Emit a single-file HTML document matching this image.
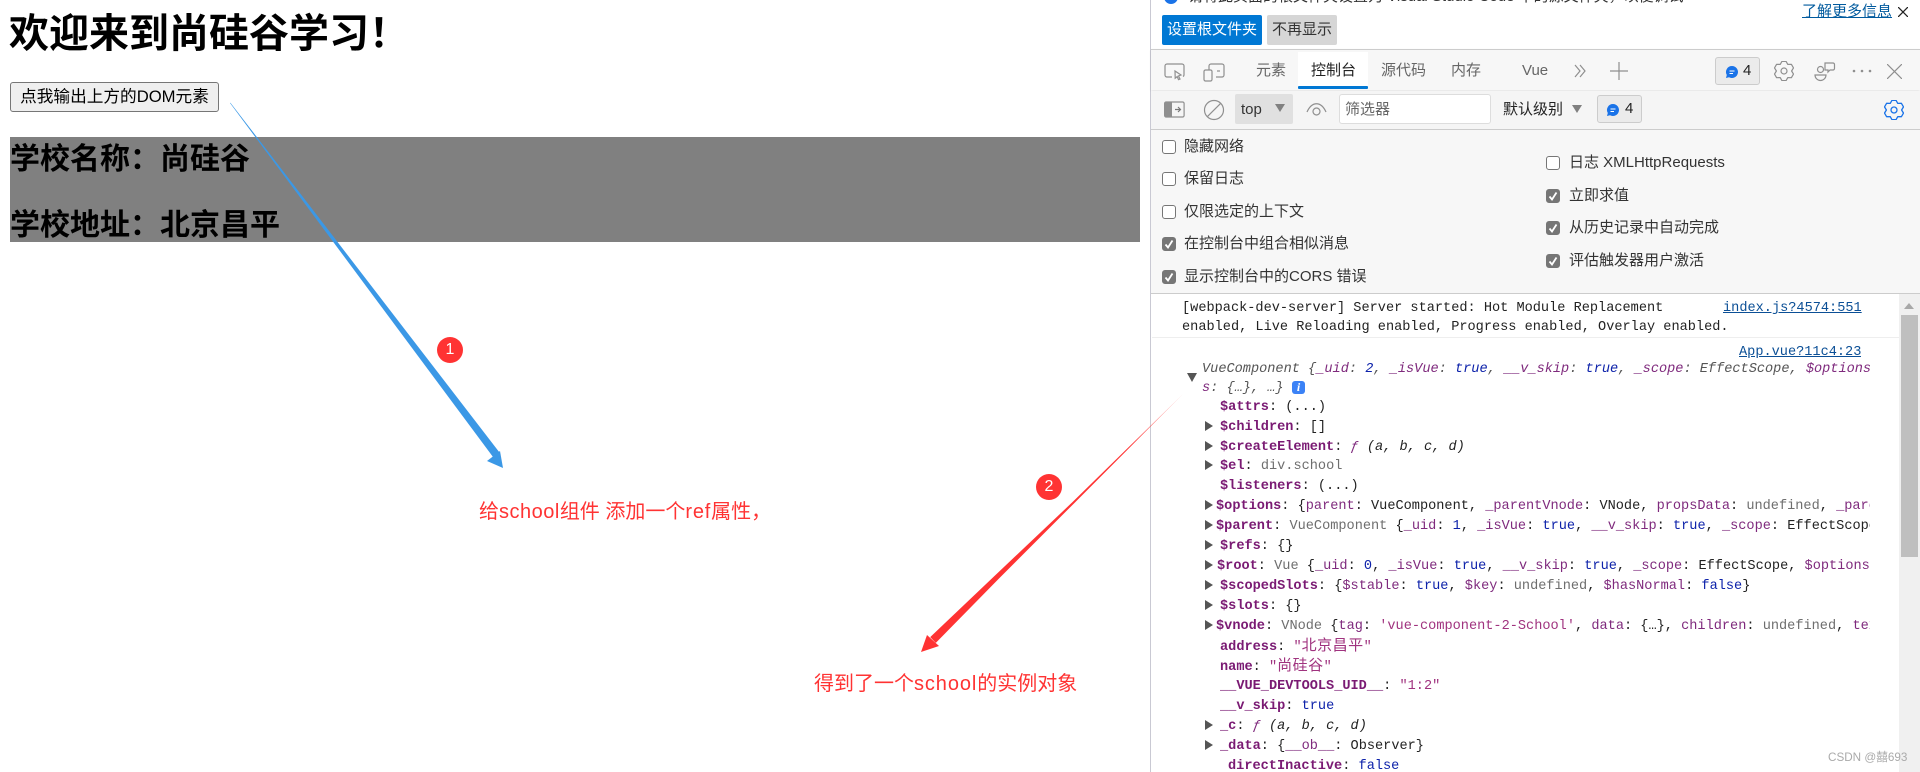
<!DOCTYPE html>
<html lang="zh"><head><meta charset="utf-8"><title>Console</title>
<style>
html,body{margin:0;padding:0;width:1920px;height:772px;overflow:hidden;background:#fff}
body{position:relative;font-family:"Liberation Sans","Noto Sans CJK SC",sans-serif;color:#000}
.a{position:absolute;white-space:nowrap}
.c{position:absolute;white-space:nowrap;height:20px;line-height:20px;margin-top:1px;font-family:"Liberation Mono","Noto Sans CJK SC",monospace;font-size:13.6px;overflow:hidden;color:#222}
.t{font-size:15px;line-height:20px;height:20px;color:#333}
.cb{position:absolute;width:14px;height:14px;box-sizing:border-box;border:1px solid #767676;border-radius:3px;background:#fff}
.cb.on{background:#767676}
.cb.on svg{position:absolute;left:0;top:0}
.k{color:#7a1a73;font-weight:bold}.p{color:#7f2a7d}.v{color:#0d22aa}.g{color:#6e6e6e}.s{color:#a0337f}
.h{font-weight:bold;font-size:30px;line-height:40px;left:10px}
.tri{position:absolute;width:0;height:0;border-style:solid;border-color:transparent transparent transparent #555;border-width:5px 0 5px 8px}
.trd{position:absolute;width:0;height:0;border-style:solid;border-color:#666 transparent transparent transparent;border-width:8px 5px 0 5px}
.lnk{color:#0b4f96;text-decoration:underline}
</style></head><body>

<div class="a" style="left:9px;top:7px;font-size:40px;line-height:54px;font-weight:bold">欢迎来到尚硅谷学习！</div>
<div class="a" style="left:10px;top:82px;width:209px;height:30px;box-sizing:border-box;border:1px solid #767676;border-radius:3px;background:#efefef;font-size:16.67px;line-height:28px;text-align:center">点我输出上方的DOM元素</div>
<div class="a" style="left:10px;top:137px;width:1130px;height:105px;background:#808080"></div>
<div class="a h" style="top:140px">学校名称：尚硅谷</div>
<div class="a h" style="top:206px">学校地址：北京昌平</div>

<!-- devtools -->
<div class="a" style="left:1150px;top:0;width:770px;height:772px;background:#fff;border-left:1.5px solid #c9c9d3;box-sizing:border-box"></div>
<div class="a" style="left:1164px;top:-10px;width:14px;height:14px;border-radius:50%;background:#1a73e8"></div>
<div class="a" style="left:1188px;top:-13px;font-size:15px;line-height:20px;color:#333">请将此页面的根文件夹设置为 Visual Studio Code 中的源文件夹，以便调试</div>
<div class="a" style="left:1162px;top:15px;width:100px;height:30px;background:#0078d4;border-radius:2px;color:#fff;font-size:15px;line-height:30px;text-align:center">设置根文件夹</div>
<div class="a" style="left:1267px;top:15px;width:70px;height:30px;background:#d6d6d6;border-radius:2px;color:#333;font-size:15px;line-height:30px;text-align:center">不再显示</div>
<div class="a" style="left:1802px;top:2px;font-size:15px;line-height:20px;color:#005a9e;text-decoration:underline">了解更多信息</div>
<svg class="a" style="left:1898px;top:7px" width="10" height="10"><path d="M0 0L10 10M10 0L0 10" stroke="#222" stroke-width="1.3"/></svg>

<!-- tab bar -->
<div class="a" style="left:1151px;top:49px;width:769px;height:41px;background:#f7f7f7;border-top:1.5px solid #ccc;box-sizing:border-box;box-shadow:0 1px 2px rgba(0,0,0,.12)"></div>
<div class="a" style="left:1298px;top:52px;width:70px;height:37px;background:#fff"></div>
<div class="a" style="left:1298px;top:86px;width:70px;height:3px;background:#0078d4;border-radius:1px"></div>
<div class="a t" style="left:1256px;top:61px;color:#666">元素</div>
<div class="a t" style="left:1311px;top:61px;color:#222">控制台</div>
<div class="a t" style="left:1381px;top:61px;color:#666">源代码</div>
<div class="a t" style="left:1451px;top:61px;color:#666">内存</div>
<div class="a t" style="left:1522px;top:61px;color:#666">Vue</div>
<svg class="a" style="left:1164px;top:62px" width="62" height="20" fill="none" stroke="#8f8f8f" stroke-width="1.2">
<path d="M8 15H3a2 2 0 0 1-2-2V4a2 2 0 0 1 2-2h15a2 2 0 0 1 2 2v9a2 2 0 0 1-1 1.5"/><path d="M11 9l6 4-2.5 1 1.5 3-1.5 .6-1.3-3-2 1.6z"/>
<path d="M45 8V4a2 2 0 0 1 2-2h11a2 2 0 0 1 2 2v9a2 2 0 0 1-2 2h-6"/><rect x="40" y="8" width="8" height="11" rx="1.5"/><path d="M53 9h3"/></svg>
<svg class="a" style="left:1574px;top:64px" width="12" height="14" fill="none" stroke="#8f8f8f" stroke-width="1.2"><path d="M1 1l5 6-5 6M6 1l5 6-5 6"/></svg>
<svg class="a" style="left:1610px;top:62px" width="18" height="18" stroke="#8f8f8f" stroke-width="1.2"><path d="M9 0v18M0 9h18"/></svg>
<div class="a" style="left:1715px;top:57px;width:45px;height:28px;box-sizing:border-box;background:#ebebeb;border:1px solid #ccc;border-radius:3px"></div>
<svg class="a" style="left:1725px;top:65px" width="14" height="14"><path d="M7 1a6 6 0 1 1-3 11.2L1 13l.8-3A6 6 0 0 1 7 1z" fill="#1a73e8"/><path d="M4.5 6h5M4.5 8.5h3.5" stroke="#fff"/></svg>
<div class="a t" style="left:1743px;top:61px;color:#222">4</div>
<svg class="a" style="left:1774px;top:61px" width="20" height="20" viewBox="-10 -10 20 20" fill="none" stroke="#8f8f8f" stroke-width="1.2" stroke-linejoin="round"><path d="M-2.1-9.6L2.1-9.6 3.8-6.6 7.4-6.7 9.5-3.1 7.6 0 9.5 3.1 7.4 6.7 3.8 6.6 2.1 9.6-2.1 9.6-3.8 6.6-7.4 6.7-9.5 3.1-7.6 0-9.5-3.1-7.4-6.7-3.8-6.6z"/><circle r="3"/></svg>
<svg class="a" style="left:1814px;top:61px" width="22" height="21" fill="none" stroke="#8f8f8f" stroke-width="1.2"><circle cx="6.5" cy="8.5" r="3"/><path d="M1 14h11c0 3-2.5 5.5-5.5 5.5S1 17 1 14z"/><path d="M11 2h8a1.5 1.5 0 0 1 1.500 1.500v4a1.500 1.500 0 0 1-1.500 1.500h-3l-2 2v-2h-3z"/></svg>
<svg class="a" style="left:1852px;top:69px" width="20" height="4" fill="#8f8f8f"><circle cx="2" cy="2" r="1.300"/><circle cx="10" cy="2" r="1.300"/><circle cx="18" cy="2" r="1.300"/></svg>
<svg class="a" style="left:1887px;top:64px" width="15" height="15"><path d="M0 0L15 15M15 0L0 15" stroke="#8f8f8f" stroke-width="1.200"/></svg>

<!-- toolbar -->
<div class="a" style="left:1151px;top:91px;width:769px;height:39px;background:#f5f5f5;border-bottom:1.5px solid #ccc;box-sizing:border-box"></div>
<svg class="a" style="left:1164px;top:101px" width="21" height="17"><rect x=".6" y="1" width="19.500" height="15" rx="1.500" fill="#f5f5f5" stroke="#8f8f8f" stroke-width="1.200"/><rect x="1" y="1" width="7" height="15" fill="#8f8f8f"/><path d="M11 8.500h5M14 6l2.500 2.500L14 11" fill="none" stroke="#777" stroke-width="1.200"/></svg>
<svg class="a" style="left:1203px;top:99px" width="22" height="22" fill="none" stroke="#8f8f8f" stroke-width="1.200"><circle cx="11" cy="11" r="9.500"/><path d="M4.300 17.700L17.700 4.300"/></svg>
<div class="a" style="left:1235px;top:94px;width:58px;height:30px;background:#e0e0e0;border-radius:2px"></div>
<div class="a t" style="left:1241px;top:100px;color:#333">top</div>
<div class="trd" style="left:1275px;top:104px;border-width:8px 5.500px 0 5.500px;border-top-color:#808080"></div>
<svg class="a" style="left:1306px;top:102px" width="21" height="15" fill="none" stroke="#8f8f8f" stroke-width="1.200"><path d="M1 10c5-11 14-11 19 0"/><circle cx="10.500" cy="9.500" r="3.500"/></svg>
<div class="a" style="left:1339px;top:94px;width:152px;height:30px;box-sizing:border-box;background:#fff;border:1px solid #ddd;border-radius:3px"></div>
<div class="a t" style="left:1345px;top:100px;color:#666">筛选器</div>
<div class="a t" style="left:1503px;top:100px;color:#222">默认级别</div>
<div class="trd" style="left:1572px;top:105px;border-width:8px 5.500px 0 5.500px;border-top-color:#808080"></div>
<div class="a" style="left:1597px;top:95px;width:45px;height:28px;box-sizing:border-box;background:#ebebeb;border:1px solid #ccc;border-radius:3px"></div>
<svg class="a" style="left:1606px;top:103px" width="14" height="14"><path d="M7 1a6 6 0 1 1-3 11.200L1 13l.8-3A6 6 0 0 1 7 1z" fill="#1a73e8"/><path d="M4.500 6h5M4.500 8.500h3.500" stroke="#fff"/></svg>
<div class="a t" style="left:1625px;top:99px;color:#222">4</div>
<svg class="a" style="left:1884px;top:100px" width="20" height="20" viewBox="-10 -10 20 20" fill="none" stroke="#1a73e8" stroke-width="1.300" stroke-linejoin="round"><path d="M-2.100-9.600L2.100-9.600 3.800-6.600 7.400-6.700 9.500-3.100 7.600 0 9.500 3.100 7.400 6.700 3.800 6.600 2.100 9.600-2.100 9.600-3.800 6.600-7.400 6.700-9.500 3.100-7.600 0-9.500-3.100-7.400-6.700-3.800-6.600z"/><circle r="3"/></svg>

<!-- settings -->
<div class="a" style="left:1151px;top:130px;width:769px;height:164px;background:#f7f7f7;border-bottom:1.5px solid #ccc;box-sizing:border-box"></div>
<div class="cb" style="left:1162px;top:140px"></div><div class="a t" style="left:1184px;top:137px">隐藏网络</div>
<div class="cb" style="left:1162px;top:172px"></div><div class="a t" style="left:1184px;top:169px">保留日志</div>
<div class="cb" style="left:1162px;top:205px"></div><div class="a t" style="left:1184px;top:202px">仅限选定的上下文</div>
<div class="cb on" style="left:1162px;top:237px"><svg width="12" height="12"><path d="M2.500 6.500l2.500 3 4.500-7" fill="none" stroke="#fff" stroke-width="1.800"/></svg></div><div class="a t" style="left:1184px;top:234px">在控制台中组合相似消息</div>
<div class="cb on" style="left:1162px;top:270px"><svg width="12" height="12"><path d="M2.500 6.500l2.500 3 4.500-7" fill="none" stroke="#fff" stroke-width="1.800"/></svg></div><div class="a t" style="left:1184px;top:267px">显示控制台中的CORS 错误</div>
<div class="cb" style="left:1546px;top:156px"></div><div class="a t" style="left:1569px;top:153px">日志 XMLHttpRequests</div>
<div class="cb on" style="left:1546px;top:189px"><svg width="12" height="12"><path d="M2.500 6.500l2.500 3 4.500-7" fill="none" stroke="#fff" stroke-width="1.800"/></svg></div><div class="a t" style="left:1569px;top:186px">立即求值</div>
<div class="cb on" style="left:1546px;top:221px"><svg width="12" height="12"><path d="M2.500 6.500l2.500 3 4.500-7" fill="none" stroke="#fff" stroke-width="1.800"/></svg></div><div class="a t" style="left:1569px;top:218px">从历史记录中自动完成</div>
<div class="cb on" style="left:1546px;top:254px"><svg width="12" height="12"><path d="M2.500 6.500l2.500 3 4.500-7" fill="none" stroke="#fff" stroke-width="1.800"/></svg></div><div class="a t" style="left:1569px;top:251px">评估触发器用户激活</div>

<!-- scrollbar -->
<div class="a" style="left:1899px;top:294px;width:21px;height:478px;background:#f0f0f0"></div>
<div class="a" style="left:1901px;top:315px;width:17px;height:242px;background:#bfbfbf"></div>
<div class="a" style="left:1904px;top:303px;width:0;height:0;border-style:solid;border-width:0 5px 6px 5px;border-color:transparent transparent #a8a8a8 transparent"></div>

<!-- console -->
<div class="a" style="left:1152px;top:337px;width:747px;height:1px;background:#eee"></div>
<div class="c" style="left:1182px;top:298px">[webpack-dev-server] Server started: Hot Module Replacement</div>
<div class="c" style="left:1723px;top:298px"><span class="lnk">index.js?4574:551</span></div>
<div class="c" style="left:1182px;top:317px">enabled, Live Reloading enabled, Progress enabled, Overlay enabled.</div>
<div class="c" style="left:1739px;top:342px"><span class="lnk">App.vue?11c4:23</span></div>
<div class="trd" style="left:1187px;top:373px;border-width:9px 5.500px 0 5.500px;border-top-color:#555"></div>
<div class="c" style="left:1202px;top:359px;width:668px;font-style:italic;color:#555">VueComponent {<span class="p">_uid</span>: <span class="v">2</span>, <span class="p">_isVue</span>: <span class="v">true</span>, <span class="p">__v_skip</span>: <span class="v">true</span>, <span class="p">_scope</span>: EffectScope, <span class="p">$options</span></div>
<div class="c" style="left:1202px;top:378px;font-style:italic;color:#555"><span class="p">s</span>: {…}, …}</div>
<div class="a" style="left:1292px;top:381px;width:13px;height:13px;background:#3b82f6;border-radius:3px;color:#fff;font:italic bold 12px/13px 'Liberation Serif',serif;text-align:center">i</div>

<div class="c" style="left:1220px;top:397px"><span class="k">$attrs</span>: (...)</div>
<div class="tri" style="left:1205px;top:421px"></div><div class="c" style="left:1220px;top:417px"><span class="k">$children</span>: []</div>
<div class="tri" style="left:1205px;top:441px"></div><div class="c" style="left:1220px;top:437px"><span class="k">$createElement</span>: <i><span class="p">ƒ</span> (a, b, c, d)</i></div>
<div class="tri" style="left:1205px;top:460px"></div><div class="c" style="left:1220px;top:456px"><span class="k">$el</span>: <span class="g">div.school</span></div>
<div class="c" style="left:1220px;top:476px"><span class="k">$listeners</span>: (...)</div>
<div class="tri" style="left:1205px;top:500px"></div><div class="c" style="left:1216px;top:496px;width:654px"><span class="k">$options</span>: {<span class="p">parent</span>: VueComponent, <span class="p">_parentVnode</span>: VNode, <span class="p">propsData</span>: <span class="g">undefined</span>, <span class="p">_parentListeners</span>: undefined}</div>
<div class="tri" style="left:1205px;top:520px"></div><div class="c" style="left:1216px;top:516px;width:654px"><span class="k">$parent</span>: <span class="g">VueComponent</span> {<span class="p">_uid</span>: <span class="v">1</span>, <span class="p">_isVue</span>: <span class="v">true</span>, <span class="p">__v_skip</span>: <span class="v">true</span>, <span class="p">_scope</span>: EffectScope, $options</div>
<div class="tri" style="left:1205px;top:540px"></div><div class="c" style="left:1220px;top:536px"><span class="k">$refs</span>: {}</div>
<div class="tri" style="left:1205px;top:560px"></div><div class="c" style="left:1217px;top:556px;width:653px"><span class="k">$root</span>: <span class="g">Vue</span> {<span class="p">_uid</span>: <span class="v">0</span>, <span class="p">_isVue</span>: <span class="v">true</span>, <span class="p">__v_skip</span>: <span class="v">true</span>, <span class="p">_scope</span>: EffectScope, <span class="p">$options</span>: {…}</div>
<div class="tri" style="left:1205px;top:580px"></div><div class="c" style="left:1220px;top:576px;width:650px"><span class="k">$scopedSlots</span>: {<span class="p">$stable</span>: <span class="v">true</span>, <span class="p">$key</span>: <span class="g">undefined</span>, <span class="p">$hasNormal</span>: <span class="v">false</span>}</div>
<div class="tri" style="left:1205px;top:600px"></div><div class="c" style="left:1220px;top:596px"><span class="k">$slots</span>: {}</div>
<div class="tri" style="left:1205px;top:620px"></div><div class="c" style="left:1216px;top:616px;width:654px"><span class="k">$vnode</span>: <span class="g">VNode</span> {<span class="p">tag</span>: <span class="s">'vue-component-2-School'</span>, <span class="p">data</span>: {…}, <span class="p">children</span>: <span class="g">undefined</span>, <span class="p">text</span>: undefined}</div>
<div class="c" style="left:1220px;top:636px"><span class="k">address</span>: <span class="s">"<span style="font-size:15px;letter-spacing:.5px">北京昌平</span>"</span></div>
<div class="c" style="left:1220px;top:656px"><span class="k">name</span>: <span class="s">"<span style="font-size:15px;letter-spacing:.5px">尚硅谷</span>"</span></div>
<div class="c" style="left:1220px;top:676px"><span class="k">__VUE_DEVTOOLS_UID__</span>: <span class="s">"1:2"</span></div>
<div class="c" style="left:1220px;top:696px"><span class="k">__v_skip</span>: <span class="v">true</span></div>
<div class="tri" style="left:1205px;top:720px"></div><div class="c" style="left:1220px;top:716px"><span class="k">_c</span>: <i><span class="p">ƒ</span> (a, b, c, d)</i></div>
<div class="tri" style="left:1205px;top:740px"></div><div class="c" style="left:1220px;top:736px"><span class="k">_data</span>: {<span class="p">__ob__</span>: Observer}</div>
<div class="c" style="left:1228px;top:756px"><span class="k">directInactive</span>: <span class="v">false</span></div>

<!-- annotations -->
<svg class="a" style="left:0;top:0" width="1920" height="772">
<defs><linearGradient id="rg" gradientUnits="userSpaceOnUse" x1="1183" y1="394" x2="1130" y2="447"><stop offset="0" stop-color="#f33" stop-opacity=".35"/><stop offset="1" stop-color="#f33"/></linearGradient></defs>
<polygon points="230,103 230.400,102.700 499.800,452.900 493.400,457.500" fill="#3b98e6"/>
<polygon points="503,468 487,461 500,451" fill="#3b98e6"/>
<polygon points="1183,394 1073.700,503.700 998.750,578.800 935.800,642.900 930.200,637.100 995.250,575.200 1072.300,502.300" fill="url(#rg)"/>
<polygon points="921,652 927,635 939,646" fill="#f33"/>
<circle cx="450" cy="350" r="13" fill="#f33"/>
<circle cx="1049" cy="487" r="13" fill="#f33"/>
</svg>
<div class="a" style="left:440px;top:340px;width:20px;text-align:center;color:#fff;font-size:16px;line-height:20px">1</div>
<div class="a" style="left:1039px;top:477px;width:20px;text-align:center;color:#fff;font-size:16px;line-height:20px">2</div>
<div class="a" style="left:479px;top:498px;color:#f33;font-size:20px;line-height:28px">给<span style="letter-spacing:.5px">school</span>组件 添加一个<span style="letter-spacing:.8px">ref</span>属性，</div>
<div class="a" style="left:814px;top:670px;color:#f33;font-size:20px;line-height:28px">得到了一个<span style="letter-spacing:.9px">school</span>的实例对象</div>
<div class="a" style="left:1828px;top:749px;color:#aaa;font-size:11.700px;line-height:18px">CSDN @囍693</div>
</body></html>
